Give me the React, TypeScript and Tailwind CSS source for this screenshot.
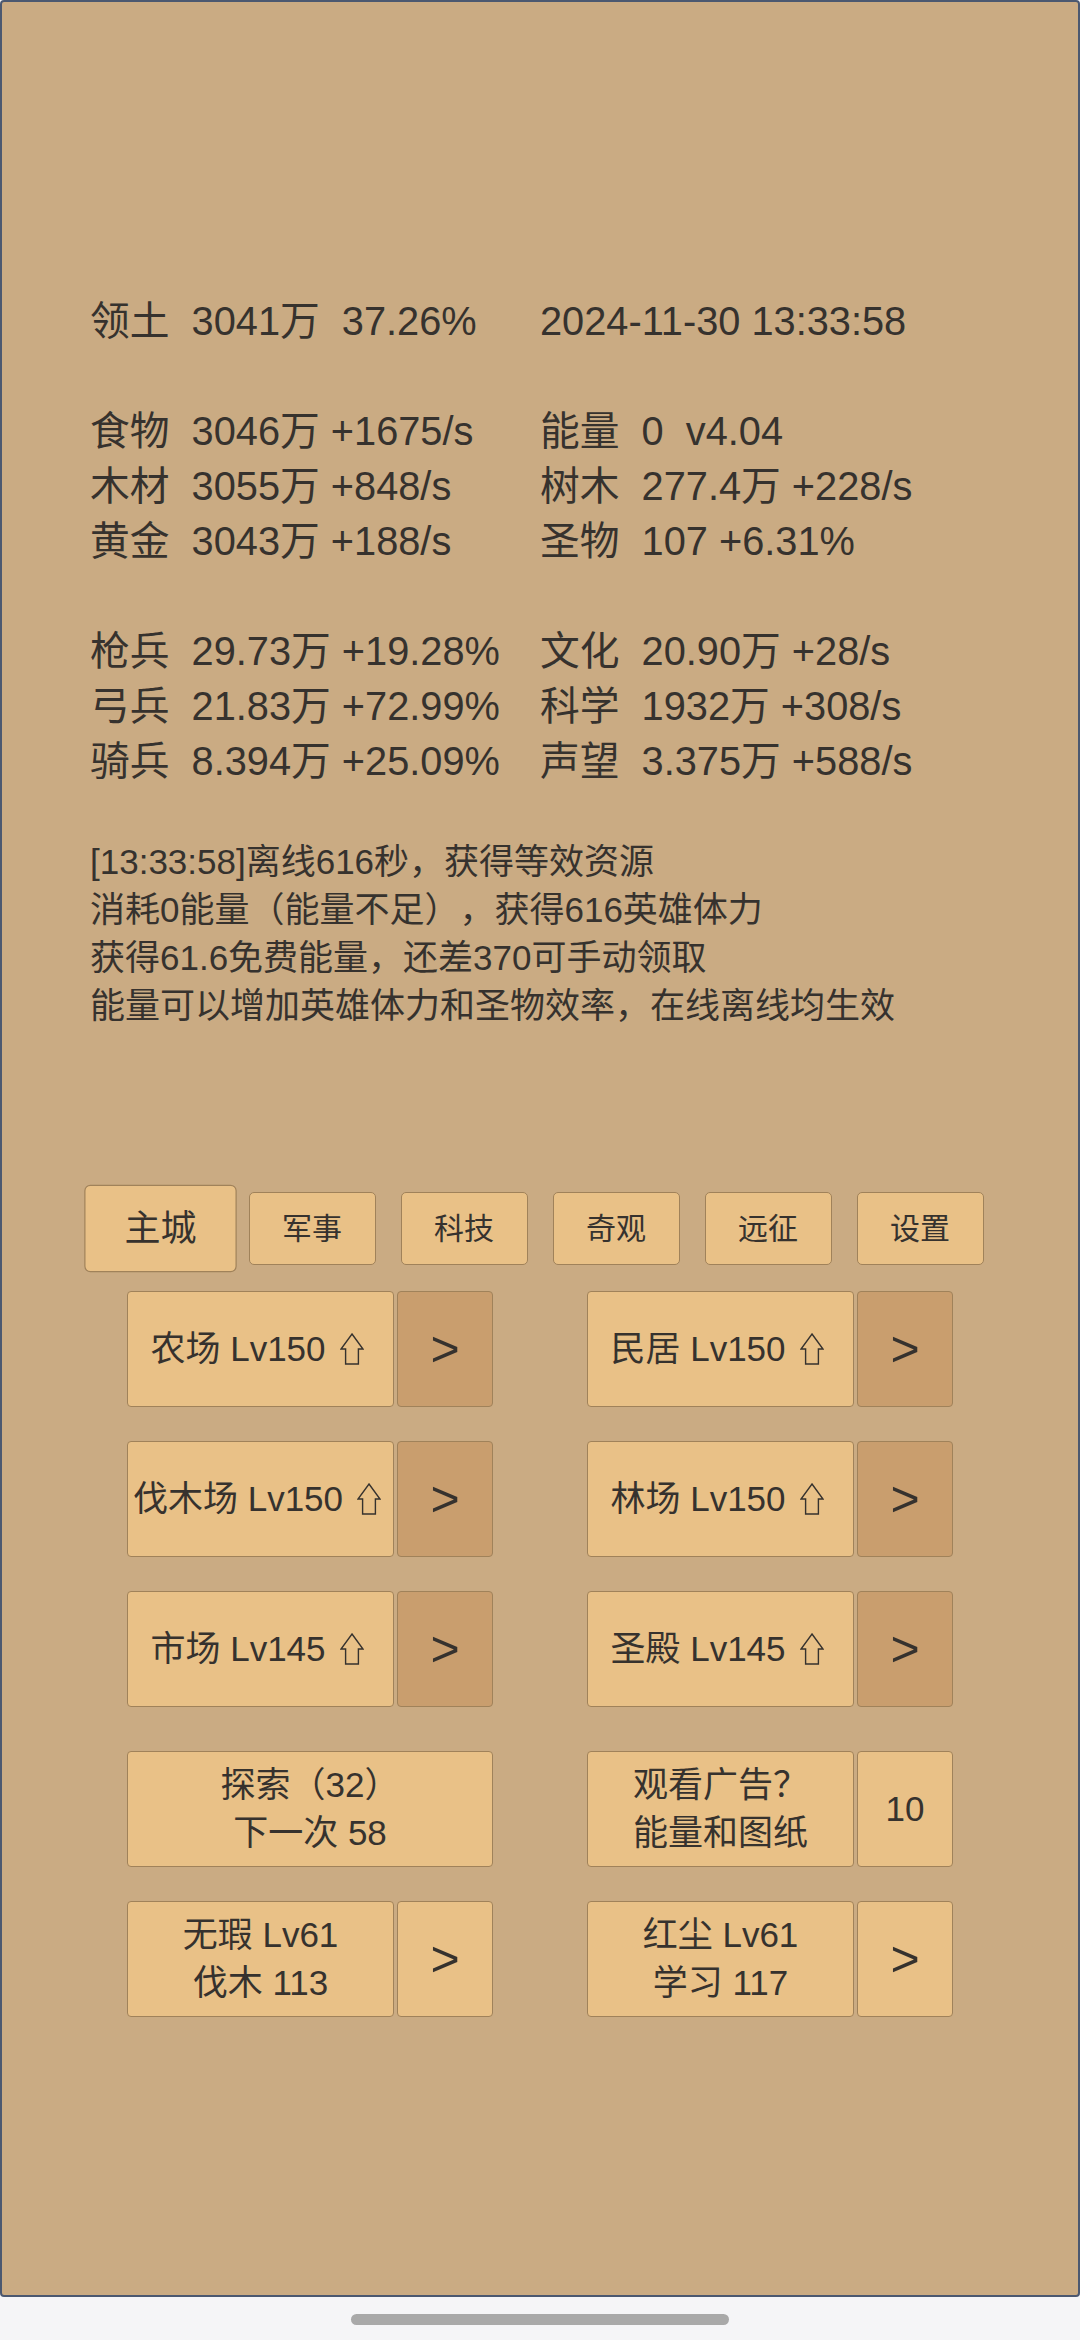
import React from "react";

const left = [
  "领土  3041万  37.26%",
  "",
  "食物  3046万 +1675/s",
  "木材  3055万 +848/s",
  "黄金  3043万 +188/s",
  "",
  "枪兵  29.73万 +19.28%",
  "弓兵  21.83万 +72.99%",
  "骑兵  8.394万 +25.09%",
];
const right = [
  "2024-11-30 13:33:58",
  "",
  "能量  0  v4.04",
  "树木  277.4万 +228/s",
  "圣物  107 +6.31%",
  "",
  "文化  20.90万 +28/s",
  "科学  1932万 +308/s",
  "声望  3.375万 +588/s",
];
const logs = [
  "[13:33:58]离线616秒，获得等效资源",
  "消耗0能量（能量不足），获得616英雄体力",
  "获得61.6免费能量，还差370可手动领取",
  "能量可以增加英雄体力和圣物效率，在线离线均生效",
];
const tabs = ["主城", "军事", "科技", "奇观", "远征", "设置"];

function UpArrow() {
  return (
    <svg width="24" height="32" viewBox="0 0 24 32" className="ml-[14px] shrink-0">
      <path
        d="M12 1 L23 16 L18.4 16 L18.4 31 L5.6 31 L5.6 16 L1 16 Z"
        fill="none"
        stroke="#36322e"
        strokeWidth="1.4"
        strokeLinejoin="miter"
      />
    </svg>
  );
}

function BuildRow({ name, lv }: { name: string; lv: string }) {
  return (
    <div className="flex justify-center gap-[3px]">
      <div className="w-[267px] h-[116px] bg-[#e9c187] border border-[#a0825a] rounded-[4px] flex items-center justify-center pr-[7px] text-[35px] whitespace-pre">
        <span>{name} Lv{lv}</span>
        <UpArrow />
      </div>
      <div className="w-[96px] h-[116px] bg-[#c99e6e] border border-[#a0825a] rounded-[4px] flex items-center justify-center text-[50px] leading-none">
        &gt;
      </div>
    </div>
  );
}

function TwoLine({ a, b }: { a: string; b: string }) {
  return (
    <div className="w-full h-full flex flex-col items-center justify-center text-[35px] leading-[48px] text-center whitespace-pre">
      <div>{a}</div>
      <div>{b}</div>
    </div>
  );
}

export default function App() {
  return (
    <div className="w-[1080px] h-[2340px] bg-[#f5f5f7] flex flex-col font-['Liberation_Sans','Noto_Sans_CJK_SC',sans-serif] text-[#36322e] [text-spacing-trim:space-all]">
      <div className="h-[2297px] w-full bg-[#caab83] border-2 border-[#4b5870] rounded-[4px] flex flex-col">
        <div className="mt-[292px] pl-[88px] grid grid-cols-[450px_450px] text-[39.75px] leading-[55px] whitespace-pre">
          <div>
            {left.map((l, i) => (
              <div key={i} className="h-[55px]">{l}</div>
            ))}
          </div>
          <div>
            {right.map((l, i) => (
              <div key={i} className="h-[55px]">{l}</div>
            ))}
          </div>
        </div>

        <div className="mt-[49px] pl-[88px] text-[35px] leading-[48px] whitespace-pre">
          {logs.map((l, i) => (
            <div key={i}>{l}</div>
          ))}
        </div>

        <div className="mt-[162px] flex justify-center gap-[25px]">
          {tabs.map((t, i) => (
            <div
              key={t}
              className={
                i === 0
                  ? "w-[127px] h-[73px] bg-[#e9c187] border border-[#a0825a] rounded-[5px] flex items-center justify-center text-[30px] scale-[1.2]"
                  : "w-[127px] h-[73px] bg-[#e9c187] border border-[#a0825a] rounded-[5px] flex items-center justify-center text-[30px]"
              }
            >
              {t}
            </div>
          ))}
        </div>

        <div className="mt-[26px] w-[920px] mx-auto grid grid-cols-2 gap-y-[34px]">
          <BuildRow name="农场" lv="150" />
          <BuildRow name="民居" lv="150" />
          <BuildRow name="伐木场" lv="150" />
          <BuildRow name="林场" lv="150" />
          <BuildRow name="市场" lv="145" />
          <BuildRow name="圣殿" lv="145" />
        </div>

        <div className="mt-[44px] w-[920px] mx-auto grid grid-cols-2 gap-y-[34px]">
          <div className="flex justify-center">
            <div className="w-[366px] h-[116px] bg-[#e9c187] border border-[#a0825a] rounded-[4px]">
              <TwoLine a="探索（32）" b="下一次 58" />
            </div>
          </div>
          <div className="flex justify-center gap-[3px]">
            <div className="w-[267px] h-[116px] bg-[#e9c187] border border-[#a0825a] rounded-[4px]">
              <TwoLine a="观看广告？" b="能量和图纸" />
            </div>
            <div className="w-[96px] h-[116px] bg-[#e9c187] border border-[#a0825a] rounded-[4px] flex items-center justify-center text-[35px]">
              10
            </div>
          </div>
          <div className="flex justify-center gap-[3px]">
            <div className="w-[267px] h-[116px] bg-[#e9c187] border border-[#a0825a] rounded-[4px]">
              <TwoLine a="无瑕 Lv61" b="伐木 113" />
            </div>
            <div className="w-[96px] h-[116px] bg-[#e9c187] border border-[#a0825a] rounded-[4px] flex items-center justify-center text-[50px] leading-none">
              &gt;
            </div>
          </div>
          <div className="flex justify-center gap-[3px]">
            <div className="w-[267px] h-[116px] bg-[#e9c187] border border-[#a0825a] rounded-[4px]">
              <TwoLine a="红尘 Lv61" b="学习 117" />
            </div>
            <div className="w-[96px] h-[116px] bg-[#e9c187] border border-[#a0825a] rounded-[4px] flex items-center justify-center text-[50px] leading-none">
              &gt;
            </div>
          </div>
        </div>
      </div>
      <div className="flex-1 flex items-start justify-center pt-[17px]">
        <div className="w-[378px] h-[11px] rounded-full bg-[#a9a9a9]" />
      </div>
    </div>
  );
}
